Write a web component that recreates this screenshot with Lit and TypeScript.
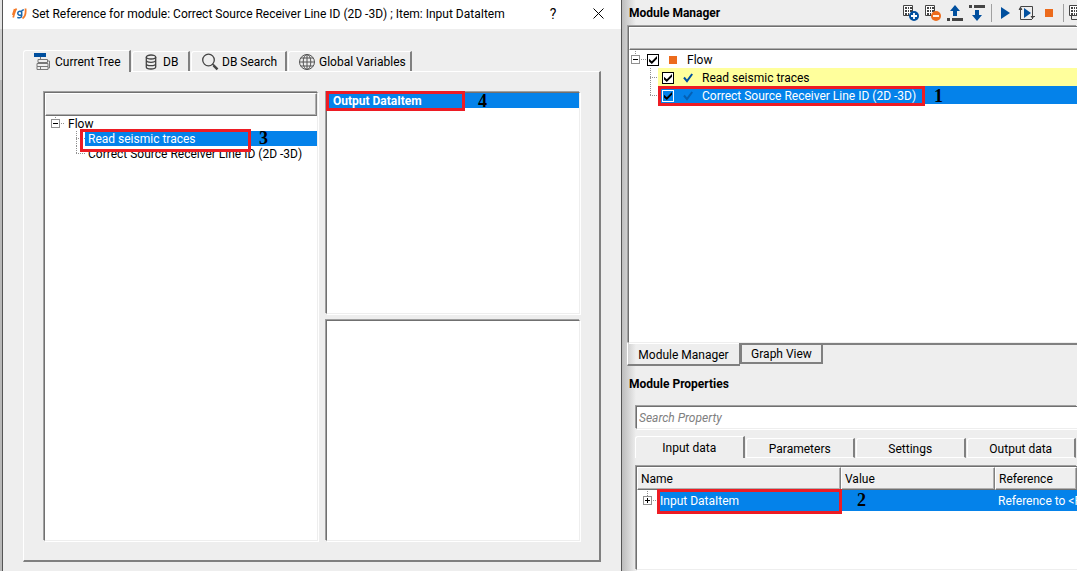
import { LitElement, html, svg, css } from "lit";
import { customElement, state } from "lit/decorators.js";

const base = css`
  :host { display: block; box-sizing: border-box; font: 12px/16px Roboto, "Open Sans", sans-serif; color: #000; }
  *, *::before, *::after { box-sizing: border-box; }
  button { font: inherit; color: inherit; background: none; border: 0; padding: 0; margin: 0; }
  h1, h2 { margin: 0; font-size: 12px; line-height: 16px; }
  h1 { font-weight: 400; }
  svg { display: block; flex: none; }
  .sunken { background: #fff; margin: 1px; border: 1px solid; border-color: #707070 #eee #eee #707070; box-shadow: -1px -1px 0 #a0a0a0, 1px 1px 0 #fff; min-width: 0; min-height: 0; }
  .head { background: #efefef; border: 1px solid; border-color: #fff #808080 #707070 #fff; box-shadow: inset -1px -1px 0 #b0b0b0; }
  .row { display: flex; align-items: center; position: relative; white-space: nowrap; }
  .cell { flex: 1; display: flex; align-items: center; height: 100%; min-width: 0; padding-top: 2px; }
  .chosen { background: #0482ea; color: #fff; }
  .mark { position: absolute; border: 3px solid #ed1c24; pointer-events: none; z-index: 2; }
  .num { position: absolute; font: bold 18px/14px "Liberation Serif", serif; color: #000; z-index: 2; }
`;

const dots = (d: string) => svg`<path d=${d} stroke="#909090" stroke-dasharray="1 1" fill="none"/>`;

const expander = (w: number, h: number, x: number, open: boolean) => {
  const y = Math.floor(h / 2);
  return html`<svg width=${w} height=${h} viewBox="0 0 ${w} ${h}" shape-rendering="crispEdges">
    ${dots(`M${x + 0.5} 1V${y - 4}`)}${dots(`M${x + 6} ${y + 0.5}H${w}`)}
    <rect x=${x - 3.5} y=${y - 3.5} width="8" height="8" fill="#fff" stroke="#909090"/>
    <path d="M${x - 2} ${y + 0.5}h5" stroke="#000"/>
    ${open ? "" : svg`<path d="M${x + 0.5} ${y - 2}v5" stroke="#000"/>`}
  </svg>`;
};

const branch = (w: number, h: number, x: number, last: boolean) => {
  const y = Math.floor(h / 2) + 0.5;
  return html`<svg width=${w} height=${h} viewBox="0 0 ${w} ${h}" shape-rendering="crispEdges">
    ${dots(`M${x + 0.5} 0V${last ? y : h}`)}${dots(`M${x} ${y}H${w}`)}
  </svg>`;
};

@customElement("reference-dialog")
class ReferenceDialog extends LitElement {
  @state() private tab = 0;

  static styles = [base, css`
    :host { display: flex; flex-direction: column; background: #eee; border: solid #555; border-width: 0 1px; min-width: 0; }
    .title { display: flex; align-items: center; height: 29px; background: #fff; padding: 0 9px 2px 9px; white-space: nowrap; }
    .title h1 { flex: 1; margin-left: 5px; }
    .title button { width: 28px; height: 27px; display: grid; place-items: center; margin-left: 17px; }
    .title .help { font-size: 14px; }
    .content { flex: 1; display: flex; flex-direction: column; padding: 21px 20px 9px 20px; min-height: 0; }
    .tabs { display: flex; align-items: flex-end; height: 22px; gap: 1px; position: relative; z-index: 1; }
    .tabs button { display: flex; align-items: center; height: 20px; margin-bottom: 1px; padding-top: 1px; border: 1px solid #fff; border-right: 2px solid #808080; border-bottom: 0; border-radius: 3px 0 0 0; white-space: nowrap; }
    .tabs .on { height: 22px; margin: 0; padding-top: 0; background: #eee; }
    .tabs .t0 { width: 108px; padding-left: 10px; gap: 4px; }
    .tabs .t1 { width: 58px; padding-left: 12px; gap: 6px; }
    .tabs .t2 { width: 96px; padding-left: 9px; gap: 3px; }
    .tabs .t3 { width: 124px; padding-left: 9px; gap: 3px; }
    .pane { flex: 1; display: grid; grid-template-columns: 276fr 256fr; gap: 6px; padding: 19px 18px 18px 19px; margin-top: -1px; border: 1px solid #fff; border-right: 2px solid #808080; border-bottom: 2px solid #808080; min-height: 0; }
    .lists { display: grid; grid-template-rows: 1fr 1fr; gap: 4px; min-height: 0; min-width: 0; }
    .head { height: 23px; }
    .row { height: 15px; line-height: 15px; }
    .cell { padding-left: 3px; }
    .list .cell { padding-left: 6px; font-weight: 700; }
    .m3 { left: 35px; top: -2px; width: 171px; height: 23px; }
    .n3 { left: 214px; top: 0; }
    .m4 { left: -1px; top: -2px; width: 139px; height: 20px; }
    .n4 { left: 151px; top: 1px; }
  `];

  render() {
    const icons = [
      html`<svg width="17" height="18" viewBox="0 0 17 18"><path d="M0 0h12v4H0z" fill="#004f9e"/><g fill="none" stroke="#777"><path d="M6.500 4v2.500M4 6.500h9.500v3H4zM3 10.500h11v3H3zM3 13.500h11v3H3zM5.500 9.500v1M12.500 9.500v1M6.500 13.500v3"/><path d="M14 8h1.500v7H14"/></g></svg>`,
      html`<svg width="12" height="16" viewBox="0 0 12 16" fill="none" stroke="#444" stroke-width="1.300"><ellipse cx="6" cy="3" rx="4.700" ry="2"/><path d="M1.300 3v10c0 1.200 2 2 4.700 2s4.700-.8 4.700-2V3M1.300 6.300c0 1.200 2 2 4.700 2s4.700-.8 4.700-2M1.300 9.700c0 1.200 2 2 4.700 2s4.700-.8 4.700-2"/></svg>`,
      html`<svg width="18" height="18" viewBox="0 0 18 18" fill="none" stroke="#444"><circle cx="7.500" cy="7" r="5.800" stroke-width="1.300"/><path d="m11.500 11 1.500 1.500" stroke-width="1.500"/><path d="m12.500 12.300 4 4" stroke-width="2.500"/></svg>`,
      html`<svg width="18" height="18" viewBox="0 0 18 18" fill="none" stroke="#555"><circle cx="9" cy="9" r="7.500"/><ellipse cx="9" cy="9" rx="3.800" ry="7.500"/><path d="M9 1.500v15M1.500 9h15M2.800 5h12.400M2.800 13h12.400"/></svg>`,
    ];
    const names = ["Current Tree", "DB", "DB Search", "Global Variables"];
    return html`
      <div class="title">
        <svg width="15" height="13" viewBox="0 0 15 13" fill="none" stroke-width="1.800"><path d="M4.500 1.500C2.500 4 2.500 6 1.200 10.500M2.700 2 .8 8" stroke="#f47b2a"/><path d="M10.500 11.500C13 10 14 6 13.500 1.500" stroke="#f47b2a"/><path d="M9.500 5.200a2 2 0 1 0-.5 2.600M9.700 3.500v5.200c0 2-2.500 2.700-4.400 1.600M9.800 3.700l2-1" stroke="#1766ae" stroke-width="1.500"/></svg>
        <h1>Set Reference for module: Correct Source Receiver Line ID (2D -3D) ; Item: Input DataItem</h1>
        <button class="help" aria-label="Help">?</button>
        <button aria-label="Close"><svg width="11" height="11" viewBox="0 0 11 11"><path d="m.5.5 10 10m0-10-10 10" stroke="#000" fill="none"/></svg></button>
      </div>
      <div class="content">
        <div class="tabs" role="tablist">
          ${names.map((n, i) => html`<button role="tab" aria-selected=${this.tab === i} class="t${i} ${this.tab === i ? "on" : ""}" @click=${() => (this.tab = i)}>${icons[i]}<span>${n}</span></button>`)}
        </div>
        <div class="pane">
          <div class="sunken" role="tree" aria-label="Current tree">
            <div class="head"></div>
            <div class="row" role="treeitem">${expander(20, 15, 10, true)}<div class="cell">Flow</div></div>
            <div class="row" role="treeitem" aria-selected="true">${branch(40, 15, 31, false)}<div class="cell chosen">Read seismic traces</div><span class="mark m3"></span><span class="num n3">3</span></div>
            <div class="row" role="treeitem">${branch(40, 15, 31, true)}<div class="cell">Correct Source Receiver Line ID (2D -3D)</div></div>
          </div>
          <div class="lists">
            <div class="sunken list" role="listbox" aria-label="Data items">
              <div class="row" role="option" aria-selected="true"><div class="cell chosen">Output DataItem</div><span class="mark m4"></span><span class="num n4">4</span></div>
            </div>
            <div class="sunken"></div>
          </div>
        </div>
      </div>`;
  }
}

@customElement("module-manager")
class ModuleManager extends LitElement {
  static styles = [base, css`
    :host { display: flex; flex-direction: column; min-width: 0; }
    .bar { display: flex; align-items: center; height: 25px; padding-left: 7px; white-space: nowrap; }
    .bar h2 { flex: 1; }
    .bar button { width: 22px; height: 22px; flex: none; overflow: hidden; }
    .bar .cut { width: 11px; }
    .sep { height: 18px; border-left: 1px solid #a0a0a0; margin-left: 3px; flex: none; width: 3px; }
    .frame { flex: 1; margin: 1px 0 0 6px; border-right: 0; overflow: hidden; }
    .head { height: 23px; border-right: 0; box-shadow: inset 0 -1px 0 #b0b0b0; }
    .row { height: 18px; }
    .box { appearance: none; margin: 0; width: 12px; height: 12px; border: 1px solid #000; background: #fff; display: grid; place-items: center; flex: none; }
    .box:checked::before { content: ""; width: 8px; height: 8px; background: #000; clip-path: polygon(0 35%, 35% 65%, 100% 0, 100% 35%, 35% 100%, 0 70%); }
    .root { margin-left: -1px; }
    .stop { width: 8px; height: 8px; background: #ec6b1c; margin: 0 10px; }
    .child { padding-left: 4px; }
    .child .tick { margin: 0 9px; }
    .warm { background: #ffff9c; }
    .chosen .box { background: #0482ea; border-color: #fff; }
    .m1 { left: 29px; top: 0; width: 267px; height: 20px; }
    .n1 { left: 305px; top: 3px; }
    .tabs { display: flex; align-items: flex-start; height: 23px; padding-left: 5px; }
    .tabs button { height: 21px; width: 83px; border: 2px solid #808080; padding-top: 1px; }
    .tabs .on { height: 23px; width: 113px; border-width: 0 1px 2px 1px; border-left-color: #fff; padding-top: 2px; }
    .rest { flex: 1; height: 2px; background: #808080; }
  `];

  render() {
    const sheet = svg`<path d="M3.500 3.500h9v10h-9z" fill="#fff" stroke="#444"/><path d="M5 5h2v2H5zM8 5h1v2H8zM10 5h2v2h-2zM5 8h2v2H5zM8 8h1v2H8zM10 8h2v2h-2zM5 11h2v2H5zM8 11h1v2H8zM10 11h2v2h-2z" fill="#444"/>`;
    const ic = (label: string, body: unknown, cls = "") => html`<button class=${cls} aria-label=${label}><svg width="22" height="22" viewBox="0 0 22 22">${body}</svg></button>`;
    const tick = (c: string) => html`<svg class="tick" width="10" height="10" viewBox="0 0 10 10"><path d="M1 4.500 4 8.200 9.200 1" stroke=${c} stroke-width="2" fill="none"/></svg>`;
    return html`
      <div class="bar">
        <h2>Module Manager</h2>
        ${ic("Add module", svg`${sheet}<circle cx="14" cy="14" r="5" fill="#004f9e"/><path d="M11 14h6m-3-3v6" stroke="#fff" stroke-width="1.800"/>`)}
        ${ic("Remove module", svg`${sheet}<circle cx="14" cy="14" r="5" fill="#ec6b1c"/><path d="M11 14h6" stroke="#fff" stroke-width="1.800"/>`)}
        ${ic("Move up", svg`<path d="M11 3l5 6h-3v5H9V9H6z" fill="#004f9e"/><path d="M3 16h3v3H3zM8 16h11v3H8z" fill="#444"/>`)}
        ${ic("Move down", svg`<path d="M11 19l5-6h-3V8H9v5H6z" fill="#004f9e"/><path d="M3 3h3v3H3zM8 3h11v3H8z" fill="#444"/>`)}
        <span class="sep"></span>
        ${ic("Run", svg`<path d="M7 5l9 6-9 6z" fill="#004f9e"/>`)}
        ${ic("Run step", svg`<path d="M8 6l7 5-7 5z" fill="#004f9e"/><path d="M5 4.500h11.500V17M4.500 4.500v13H16M3 7.500h3M15 14.500h4" fill="none" stroke="#444"/><path d="M2.500 7.500l2-3 2 3zM14.500 14l2 3 2-3z" fill="#444"/>`)}
        ${ic("Stop", svg`<path d="M7 7h8v8H7z" fill="#ec6b1c"/>`)}
        <span class="sep"></span>
        ${ic("More", svg`<path d="M5.500 6.500v11H16" fill="none" stroke="#444"/>${sheet}`, "cut")}
      </div>
      <div class="sunken frame" role="tree" aria-label="Modules">
        <div class="head"></div>
        <div class="row" role="treeitem">${expander(19, 18, 6, true)}<label class="cell root"><input class="box" type="checkbox" checked><span class="stop"></span>Flow</label></div>
        <div class="row" role="treeitem">${branch(29, 18, 21, false)}<label class="cell child warm"><input class="box" type="checkbox" checked>${tick("#004f9e")}Read seismic traces</label></div>
        <div class="row" role="treeitem" aria-selected="true">${branch(29, 18, 21, true)}<label class="cell child chosen"><input class="box" type="checkbox" checked>${tick("#0560b4")}Correct Source Receiver Line ID (2D -3D)</label><span class="mark m1"></span><span class="num n1">1</span></div>
      </div>
      <div class="tabs" role="tablist">
        <button class="on" role="tab" aria-selected="true">Module Manager</button>
        <button role="tab" aria-selected="false">Graph View</button>
        <span class="rest"></span>
      </div>`;
  }
}

@customElement("module-properties")
class ModuleProperties extends LitElement {
  @state() private tab = 0;

  static styles = [base, css`
    :host { display: flex; flex-direction: column; padding-left: 13px; min-width: 0; }
    h2 { margin: 10px 0 13px -6px; }
    .search { display: block; height: 23px; margin: 1px 0 1px 1px; padding: 0 2px; border-right: 0; border-radius: 0; outline: 0; font: italic 12px/16px Roboto, "Open Sans", sans-serif; flex: none; }
    .search::placeholder { color: #808080; opacity: 1; }
    .tabs { display: grid; grid-template-columns: repeat(4, 1fr); align-items: end; gap: 1px; height: 23px; margin: 6px 1px 6px 0; flex: none; }
    .tabs button { height: 20px; margin-bottom: 1px; padding-top: 1px; border: 1px solid #fff; border-right: 2px solid #808080; border-radius: 3px 0 0 0; }
    .tabs .on { height: 22px; border-bottom: 0; padding: 0; }
    .frame { flex: 1; margin-right: 0; border-right: 0; overflow: hidden; }
    table { width: 100%; table-layout: fixed; border-collapse: separate; border-spacing: 0; white-space: nowrap; }
    .name { width: 204px; }
    .value { width: 154px; }
    th { height: 23px; padding: 0 0 0 3px; font-weight: 400; text-align: left; }
    td { height: 21px; padding: 0; position: relative; }
    .chosen td { padding-left: 3px; }
    .chosen td.first { padding: 0; background: #fff; }
    .label { padding: 0 0 0 2px; height: 21px; }
    .m2 { left: 20px; top: -1px; width: 185px; height: 25px; }
    .n2 { left: 16px; top: 3px; }
    .ref { overflow: hidden; }
  `];

  render() {
    return html`
      <h2>Module Properties</h2>
      <input class="search sunken" type="search" aria-label="Search Property" placeholder="Search Property">
      <div class="tabs" role="tablist">
        ${["Input data", "Parameters", "Settings", "Output data"].map((n, i) => html`<button role="tab" aria-selected=${this.tab === i} class=${this.tab === i ? "on" : ""} @click=${() => (this.tab = i)}>${n}</button>`)}
      </div>
      <div class="sunken frame">
        <table>
          <thead><tr><th class="head name">Name</th><th class="head value">Value</th><th class="head">Reference</th></tr></thead>
          <tbody><tr class="chosen">
            <td class="first"><div class="row">${expander(21, 21, 10, false)}<div class="cell chosen label">Input DataItem</div></div><span class="mark m2"></span></td>
            <td><span class="num n2">2</span></td>
            <td class="ref">Reference to &lt;Read seismic traces&gt;</td>
          </tr></tbody>
        </table>
      </div>`;
  }
}

@customElement("app-root")
class AppRoot extends LitElement {
  static styles = css`
    :host { display: grid; grid-template-columns: 2px minmax(0, 620fr) minmax(0, 455fr); height: 100vh; background: #eee; overflow: hidden; }
    .edge { background: linear-gradient(#e4e4e4 0 29px, #d0d0d0 29px 80px, #b8b8b8 80px); }
    .side { display: grid; grid-template-rows: 366fr 205fr; min-width: 0; min-height: 0; background: linear-gradient(90deg, #bdbdbd, #eee 14px); overflow: hidden; }
  `;

  render() {
    return html`
      <div class="edge"></div>
      <reference-dialog></reference-dialog>
      <div class="side">
        <module-manager></module-manager>
        <module-properties></module-properties>
      </div>`;
  }
}
